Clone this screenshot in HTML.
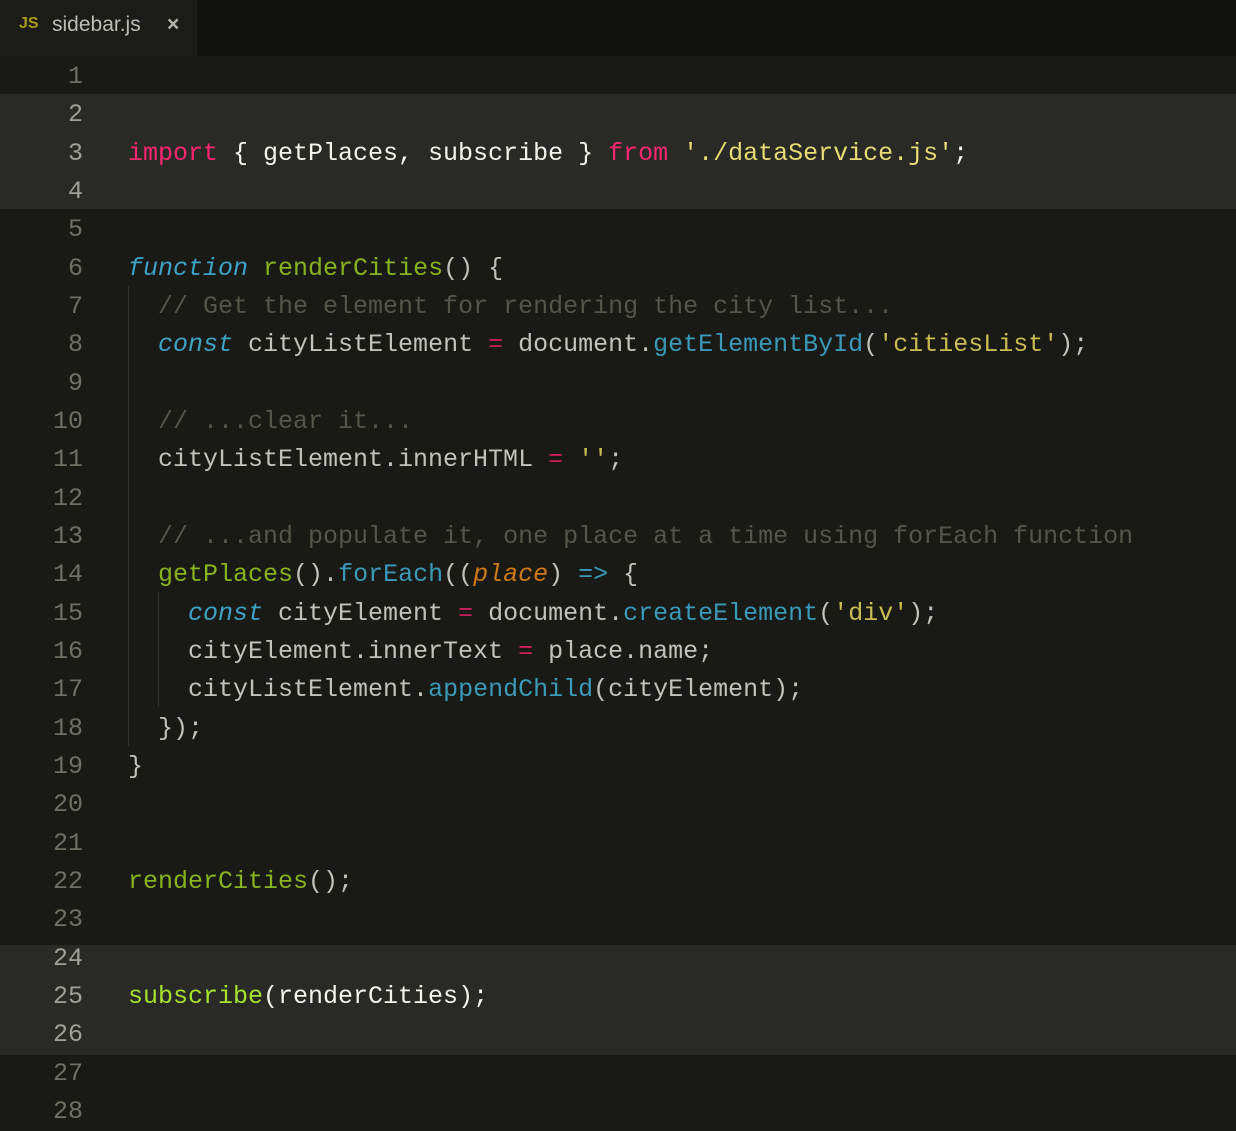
<!DOCTYPE html>
<html><head><meta charset="utf-8"><style>
html,body{margin:0;padding:0;background:#191916;width:1236px;height:1130px;overflow:hidden}
.tabbar{position:absolute;left:0;top:0;width:1236px;height:56px;background:#121210}
.tab{position:absolute;left:0;top:0;width:197px;height:56px;background:#1b1b18;font-family:"Liberation Sans",sans-serif}
.tab .js{position:absolute;left:19px;top:15px;color:#a89b1e;font-size:16px;font-weight:bold}
.tab .nm{position:absolute;left:52px;top:13px;color:#bdbdb5;font-size:21px}
.tab .x{position:absolute;left:167px;top:13px;color:#b5b5ad;font-size:21px;font-weight:bold}
.hl{position:absolute;left:0;width:1236px;background:#292925}
.code{position:absolute;left:0;top:58px;font-family:"Liberation Mono",monospace;font-size:25px;}
.l{height:38.33px;line-height:38.33px;position:relative;white-space:pre}
.n{display:inline-block;width:83px;text-align:right;color:#6f6f66;margin-right:45px}
.a .n{color:#a0a09a}
.t{color:#c2c2ba}
.a .t{color:#f4f4ef}
.k{color:#f92672}.kd{color:#c91f5d}
.i{color:#3ea2c4;font-style:italic}
.g{color:#89b31e}.ga{color:#a6e22e}
.s{color:#c9bc52}.sa{color:#e6db74}
.f{color:#3a9ab8}
.c{color:#55554c}
.p{color:#d07a14;font-style:italic}
.guide{position:absolute;width:1px;background:#33332e}
</style></head><body>
<div class="tabbar"><div class="tab"><span class="js">JS</span><span class="nm">sidebar.js</span><span class="x">×</span></div></div>
<div class="hl" style="top:94px;height:115px"></div>
<div class="hl" style="top:945px;height:110px"></div>
<div class="guide" style="left:128px;top:286px;height:460px"></div>
<div class="guide" style="left:158px;top:592px;height:115px"></div>
<div class="code"><div class="l"><span class="n">1</span></div><div class="l a"><span class="n">2</span></div><div class="l a"><span class="n">3</span><span class="t"><span class="k">import</span> { getPlaces, subscribe } <span class="k">from</span> <span class="sa">'./dataService.js'</span>;</span></div><div class="l a"><span class="n">4</span></div><div class="l"><span class="n">5</span></div><div class="l"><span class="n">6</span><span class="t"><span class="i">function</span> <span class="g">renderCities</span>() {</span></div><div class="l"><span class="n">7</span><span class="t">  <span class="c">// Get the element for rendering the city list...</span></span></div><div class="l"><span class="n">8</span><span class="t">  <span class="i">const</span> cityListElement <span class="kd">=</span> document.<span class="f">getElementById</span>(<span class="s">'citiesList'</span>);</span></div><div class="l"><span class="n">9</span></div><div class="l"><span class="n">10</span><span class="t">  <span class="c">// ...clear it...</span></span></div><div class="l"><span class="n">11</span><span class="t">  cityListElement.innerHTML <span class="kd">=</span> <span class="s">''</span>;</span></div><div class="l"><span class="n">12</span></div><div class="l"><span class="n">13</span><span class="t">  <span class="c">// ...and populate it, one place at a time using forEach function</span></span></div><div class="l"><span class="n">14</span><span class="t">  <span class="g">getPlaces</span>().<span class="f">forEach</span>((<span class="p">place</span>) <span class="f">=&gt;</span> {</span></div><div class="l"><span class="n">15</span><span class="t">    <span class="i">const</span> cityElement <span class="kd">=</span> document.<span class="f">createElement</span>(<span class="s">'div'</span>);</span></div><div class="l"><span class="n">16</span><span class="t">    cityElement.innerText <span class="kd">=</span> place.name;</span></div><div class="l"><span class="n">17</span><span class="t">    cityListElement.<span class="f">appendChild</span>(cityElement);</span></div><div class="l"><span class="n">18</span><span class="t">  });</span></div><div class="l"><span class="n">19</span><span class="t">}</span></div><div class="l"><span class="n">20</span></div><div class="l"><span class="n">21</span></div><div class="l"><span class="n">22</span><span class="t"><span class="g">renderCities</span>();</span></div><div class="l"><span class="n">23</span></div><div class="l a"><span class="n">24</span></div><div class="l a"><span class="n">25</span><span class="t"><span class="ga">subscribe</span>(renderCities);</span></div><div class="l a"><span class="n">26</span></div><div class="l"><span class="n">27</span></div><div class="l"><span class="n">28</span></div></div>
</body></html>
